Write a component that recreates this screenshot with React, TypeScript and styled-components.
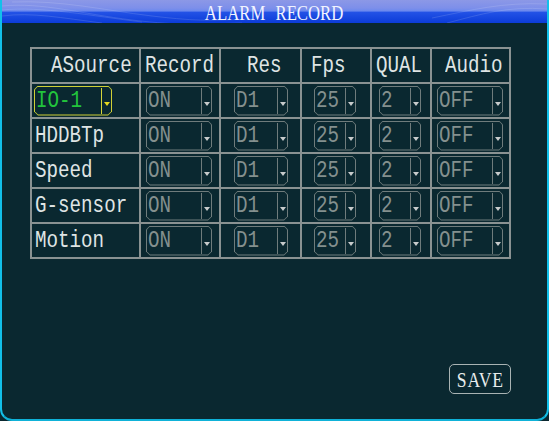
import React from "react";
import styled, { createGlobalStyle } from "styled-components";

const Global = createGlobalStyle`
  html, body { margin: 0; padding: 0; background: #0a2830; }
  #root { width: 549px; height: 421px; }
`;

const BG = "#0a2830";
const LINE = "#8a9292";
const DIM = "#6f7c7c";
const DIMTEXT = "#84908e";

const Frame = styled.div`
  width: 549px;
  height: 421px;
  box-sizing: border-box;
  border-left: 2px solid #12c0ea;
  border-right: 2px solid #12c0ea;
  border-bottom: 2px solid #0fb2d8;
  border-radius: 0 0 12px 12px;
  background: ${BG};
  display: flex;
  flex-direction: column;
  overflow: hidden;
`;

const TitleBar = styled.div`
  position: relative;
  height: 23px;
  flex: none;
  display: flex;
  align-items: center;
  justify-content: center;
  background: linear-gradient(
    180deg,
    #8c98e6 0%,
    #7d8fea 35%,
    #6a88ee 48%,
    #2352e6 53%,
    #0c3cd8 100%
  );
`;

const Waves = styled.svg`
  position: absolute;
  inset: 0;
  width: 100%;
  height: 100%;
  pointer-events: none;
`;

const Title = styled.span`
  position: relative;
  font-family: "Liberation Serif", "Times New Roman", serif;
  font-size: 22px;
  line-height: 20px;
  color: #f2f4ff;
  word-spacing: 8px;
  display: inline-block;
  transform: scaleX(0.76);
  transform-origin: 50% 50%;
  white-space: pre;
  padding-top: 2px;
`;

const Content = styled.div`
  flex: 1;
  display: flex;
  flex-direction: column;
  padding: 24px 36px 25px 28px;
`;

const Table = styled.div`
  display: grid;
  grid-template-columns: 107px 78px 79px 68px 58px 77px;
  grid-auto-rows: 33px;
  gap: 2px;
  padding: 2px;
  background: ${LINE};
  width: fit-content;
`;

const Cell = styled.div<{ $pad?: number }>`
  background: ${BG};
  display: flex;
  align-items: center;
  padding-left: ${(p) => p.$pad ?? 0}px;
  overflow: hidden;
`;

const Mono = styled.span<{ $color?: string }>`
  font-family: "Liberation Mono", "Courier New", monospace;
  font-size: 24px;
  line-height: 1;
  color: ${(p) => p.$color ?? "#dfe4e4"};
  display: inline-block;
  transform: scaleX(0.8);
  transform-origin: 0 50%;
  white-space: pre;
`;

const octagon = (c: number) =>
  `polygon(${c}px 0, calc(100% - ${c}px) 0, 100% ${c}px, 100% calc(100% - ${c}px), calc(100% - ${c}px) 100%, ${c}px 100%, 0 calc(100% - ${c}px), 0 ${c}px)`;

const SelectOuter = styled.div<{ $w: number; $ml: number; $active?: boolean }>`
  width: ${(p) => p.$w}px;
  height: 30px;
  margin-left: ${(p) => p.$ml}px;
  box-sizing: border-box;
  padding: 1px;
  background: ${(p) => (p.$active ? "#cfcf36" : DIM)};
  clip-path: ${octagon(4)};
  flex: none;
`;

const SelectInner = styled.div`
  height: 100%;
  background: ${BG};
  clip-path: ${octagon(3)};
  display: flex;
  align-items: stretch;
`;

const SelectValue = styled.div`
  flex: 1;
  display: flex;
  align-items: center;
  padding-left: 1px;
  overflow: hidden;
`;

const ArrowBox = styled.div<{ $active?: boolean }>`
  width: 9px;
  flex: none;
  border-left: 1px solid ${(p) => (p.$active ? "#d6d63a" : DIM)};
  display: flex;
  justify-content: center;
  align-items: flex-start;
  padding-top: 14px;
  margin: 1px 0;
`;

const Tri = styled.span<{ $active?: boolean }>`
  width: 0;
  height: 0;
  border-left: 3px solid transparent;
  border-right: 3px solid transparent;
  border-top: 4px solid ${(p) => (p.$active ? "#e6d820" : "#c8cccc")};
`;

const Footer = styled.div`
  margin-top: auto;
  display: flex;
  justify-content: flex-end;
`;

const SaveButton = styled.div`
  width: 62px;
  height: 30px;
  box-sizing: border-box;
  border: 1px solid #a9b3b3;
  border-radius: 5px;
  display: flex;
  align-items: center;
  justify-content: center;
`;

const SaveText = styled.span`
  font-family: "Liberation Serif", "Times New Roman", serif;
  font-size: 22px;
  line-height: 1;
  color: #e8ecec;
  display: inline-block;
  transform: scaleX(0.8);
  letter-spacing: 1px;
  margin-top: 2px;
`;

type SelProps = { value: string; w: number; ml: number; active?: boolean };

const Select: React.FC<SelProps> = ({ value, w, ml, active }) => (
  <SelectOuter $w={w} $ml={ml} $active={active}>
    <SelectInner>
      <SelectValue>
        <Mono $color={active ? "#22c43c" : DIMTEXT}>{value}</Mono>
      </SelectValue>
      <ArrowBox $active={active}>
        <Tri $active={active} />
      </ArrowBox>
    </SelectInner>
  </SelectOuter>
);

const headers: { text: string; pad: number }[] = [
  { text: "ASource", pad: 19 },
  { text: "Record", pad: 4 },
  { text: "Res", pad: 26 },
  { text: "Fps", pad: 9 },
  { text: "QUAL", pad: 4 },
  { text: "Audio", pad: 13 },
];

const rows = ["IO-1", "HDDBTp", "Speed", "G-sensor", "Motion"];

export default function App() {
  return (
    <>
      <Global />
      <Frame>
        <TitleBar>
          <Waves viewBox="0 0 545 23" preserveAspectRatio="none">
            <g fill="none" stroke="#ffffff" strokeWidth="0.6" opacity="0.22">
              <path d="M0 6 C 40 2, 80 14, 130 20 S 200 24, 240 23" />
              <path d="M0 10 C 40 6, 90 16, 140 22" />
              <path d="M10 2 C 60 0, 100 10, 150 16 S 210 20, 250 19" />
              <path d="M0 16 C 30 12, 60 18, 100 23" />
              <path d="M545 4 C 500 2, 470 10, 430 18" />
              <path d="M545 9 C 505 6, 480 14, 445 23" />
            </g>
          </Waves>
          <Title>ALARM RECORD</Title>
        </TitleBar>
        <Content>
          <Table>
            {headers.map((h) => (
              <Cell key={h.text} $pad={h.pad}>
                <Mono>{h.text}</Mono>
              </Cell>
            ))}
            {rows.map((r, i) => (
              <React.Fragment key={r}>
                <Cell $pad={i === 0 ? 0 : 3}>
                  {i === 0 ? (
                    <Select value="IO-1" w={78} ml={2} active />
                  ) : (
                    <Mono>{r}</Mono>
                  )}
                </Cell>
                <Cell>
                  <Select value="ON" w={66} ml={5} />
                </Cell>
                <Cell>
                  <Select value="D1" w={54} ml={13} />
                </Cell>
                <Cell>
                  <Select value="25" w={42} ml={12} />
                </Cell>
                <Cell>
                  <Select value="2" w={42} ml={7} />
                </Cell>
                <Cell>
                  <Select value="OFF" w={66} ml={5} />
                </Cell>
              </React.Fragment>
            ))}
          </Table>
          <Footer>
            <SaveButton>
              <SaveText>SAVE</SaveText>
            </SaveButton>
          </Footer>
        </Content>
      </Frame>
    </>
  );
}
